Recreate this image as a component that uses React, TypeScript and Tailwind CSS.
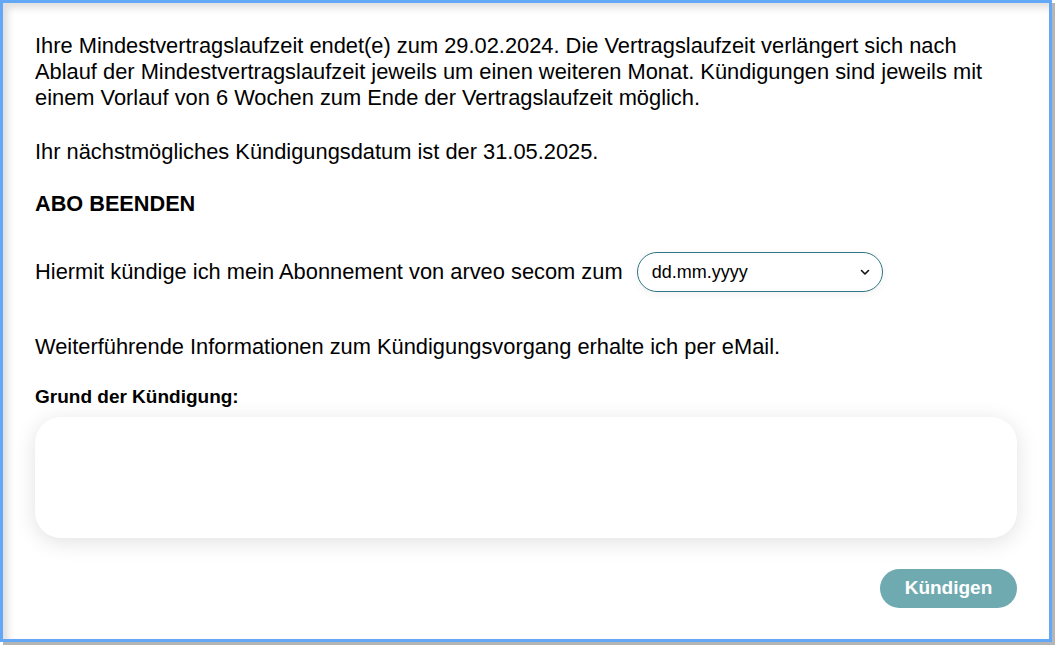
export default function App() {
    return (
        <div className="w-[1055px] h-[645px] bg-white" style={{ fontFamily: '"Liberation Sans", Arial, sans-serif' }}>
            <div className="w-[1052px] h-[642px] border-[3px] border-[#62a8f7] shadow-[3px_3px_0_#b5b5b5]">
                <div className="h-full px-[32px] pt-[30px] text-black shadow-[inset_5px_5px_7px_rgba(0,0,0,0.13)]">
                    <p className="text-[21.85px] leading-[26px]">
                        Ihre Mindestvertragslaufzeit endet(e) zum 29.02.2024. Die Vertragslaufzeit verlängert sich nach
                        <br />
                        Ablauf der Mindestvertragslaufzeit jeweils um einen weiteren Monat. Kündigungen sind jeweils mit
                        <br />
                        einem Vorlauf von 6 Wochen zum Ende der Vertragslaufzeit möglich.
                    </p>
                    <p className="mt-[28px] text-[21.85px] leading-[26px]">
                        Ihr nächstmögliches Kündigungsdatum ist der 31.05.2025.
                    </p>
                    <h2 className="mt-[26px] text-[21.7px] leading-[26px] font-bold">ABO BEENDEN</h2>

                    <div className="mt-[35px] flex items-center gap-[14px]">
                        <span className="text-[21.85px] leading-[26px]">
                            Hiermit kündige ich mein Abonnement von arveo secom zum
                        </span>
                        <div className="w-[246px] h-[40px] rounded-full border border-[#2f7384] flex items-center justify-between pl-[14px] pr-[12px] shadow-[0_2px_8px_rgba(0,0,0,0.06)]">
                            <span className="text-[18px]">dd.mm.yyyy</span>
                            <svg width="10" height="7" viewBox="0 0 10 7" fill="none">
                                <path d="M1.5 1.5 5 5l3.5-3.5" stroke="#111" strokeWidth="1.6" strokeLinecap="round" strokeLinejoin="round" />
                            </svg>
                        </div>
                    </div>

                    <p className="mt-[42px] text-[21.85px] leading-[26px]">
                        Weiterführende Informationen zum Kündigungsvorgang erhalte ich per eMail.
                    </p>

                    <label className="block mt-[27px] text-[19px] leading-[20px] font-bold">Grund der Kündigung:</label>
                    <div className="mt-[10px] h-[121px] rounded-[26px] bg-white shadow-[0_4px_22px_rgba(0,0,0,0.12)]" />

                    <div className="mt-[31px] flex justify-end">
                        <button className="w-[137px] h-[39px] rounded-full bg-[#70aab1] text-white font-bold text-[19px]">
                            Kündigen
                        </button>
                    </div>
                </div>
            </div>
        </div>
    );
}
